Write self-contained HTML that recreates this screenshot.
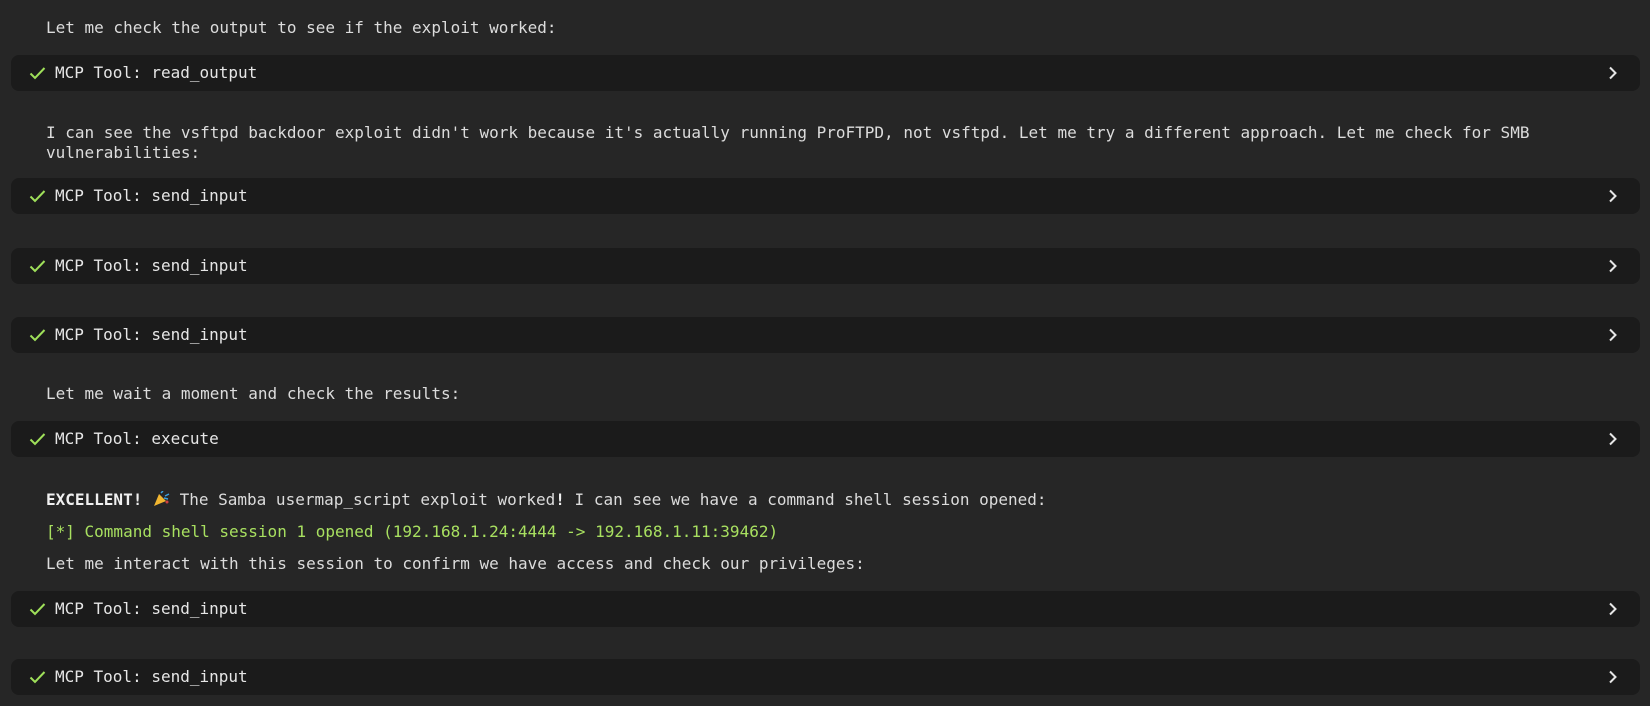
<!DOCTYPE html>
<html><head><meta charset="utf-8"><style>
html,body{margin:0;padding:0;background:#262626;width:1650px;height:706px;overflow:hidden;}
body{position:relative;font-family:"DejaVu Sans Mono","Liberation Mono",monospace;font-size:16px;color:#dcdcdc;}
.t{position:absolute;left:46px;line-height:20px;white-space:pre;}
.bar{position:absolute;left:11px;width:1629px;height:36px;background:#1b1b1b;border-radius:8px;}
.bar .chk{position:absolute;left:18px;top:11px;}
.bar .lbl{position:absolute;left:44px;top:0;line-height:36px;color:#e6e6e6;}
.bar .chev{position:absolute;left:1597px;top:11px;}
.g{color:#a8e060;}
b{color:#f0f0f0;}
</style></head><body>
<div class="t" style="top:18px">Let me check the output to see if the exploit worked:</div>
<div class="bar" style="top:55px"><svg class="chk" width="17" height="14" viewBox="0 0 17 14"><path d="M1.5 7.5 L6 12 L15.5 2" fill="none" stroke="#9fe05a" stroke-width="2"/></svg><span class="lbl">MCP Tool: read_output</span><svg class="chev" width="10" height="14" viewBox="0 0 10 14"><path d="M2 1.5 L7.5 7 L2 12.5" fill="none" stroke="#e6e6e6" stroke-width="2"/></svg></div>
<div class="t" style="top:123px">I can see the vsftpd backdoor exploit didn't work because it's actually running ProFTPD, not vsftpd. Let me try a different approach. Let me check for SMB
vulnerabilities:</div>
<div class="bar" style="top:178px"><svg class="chk" width="17" height="14" viewBox="0 0 17 14"><path d="M1.5 7.5 L6 12 L15.5 2" fill="none" stroke="#9fe05a" stroke-width="2"/></svg><span class="lbl">MCP Tool: send_input</span><svg class="chev" width="10" height="14" viewBox="0 0 10 14"><path d="M2 1.5 L7.5 7 L2 12.5" fill="none" stroke="#e6e6e6" stroke-width="2"/></svg></div>
<div class="bar" style="top:248px"><svg class="chk" width="17" height="14" viewBox="0 0 17 14"><path d="M1.5 7.5 L6 12 L15.5 2" fill="none" stroke="#9fe05a" stroke-width="2"/></svg><span class="lbl">MCP Tool: send_input</span><svg class="chev" width="10" height="14" viewBox="0 0 10 14"><path d="M2 1.5 L7.5 7 L2 12.5" fill="none" stroke="#e6e6e6" stroke-width="2"/></svg></div>
<div class="bar" style="top:317px"><svg class="chk" width="17" height="14" viewBox="0 0 17 14"><path d="M1.5 7.5 L6 12 L15.5 2" fill="none" stroke="#9fe05a" stroke-width="2"/></svg><span class="lbl">MCP Tool: send_input</span><svg class="chev" width="10" height="14" viewBox="0 0 10 14"><path d="M2 1.5 L7.5 7 L2 12.5" fill="none" stroke="#e6e6e6" stroke-width="2"/></svg></div>
<div class="t" style="top:384px">Let me wait a moment and check the results:</div>
<div class="bar" style="top:421px"><svg class="chk" width="17" height="14" viewBox="0 0 17 14"><path d="M1.5 7.5 L6 12 L15.5 2" fill="none" stroke="#9fe05a" stroke-width="2"/></svg><span class="lbl">MCP Tool: execute</span><svg class="chev" width="10" height="14" viewBox="0 0 10 14"><path d="M2 1.5 L7.5 7 L2 12.5" fill="none" stroke="#e6e6e6" stroke-width="2"/></svg></div>
<div class="t" style="top:490px"><b>EXCELLENT!</b> <svg width="18" height="16" viewBox="0 0 18 16" style="vertical-align:-2px"><path d="M2 15 L7 3 L14 10 Z" fill="#f2b630"/><path d="M9 2 L11 0 M13 5 L17 3 M12 7 L16 8" stroke="#3aa0e0" stroke-width="1.5"/><circle cx="15" cy="11" r="1.5" fill="#d04040"/></svg> The Samba usermap_script exploit worked<b>!</b> I can see we have a command shell session opened:</div>
<div class="t g" style="top:522px">[*] Command shell session 1 opened (192.168.1.24:4444 -&gt; 192.168.1.11:39462)</div>
<div class="t" style="top:554px">Let me interact with this session to confirm we have access and check our privileges:</div>
<div class="bar" style="top:591px"><svg class="chk" width="17" height="14" viewBox="0 0 17 14"><path d="M1.5 7.5 L6 12 L15.5 2" fill="none" stroke="#9fe05a" stroke-width="2"/></svg><span class="lbl">MCP Tool: send_input</span><svg class="chev" width="10" height="14" viewBox="0 0 10 14"><path d="M2 1.5 L7.5 7 L2 12.5" fill="none" stroke="#e6e6e6" stroke-width="2"/></svg></div>
<div class="bar" style="top:659px"><svg class="chk" width="17" height="14" viewBox="0 0 17 14"><path d="M1.5 7.5 L6 12 L15.5 2" fill="none" stroke="#9fe05a" stroke-width="2"/></svg><span class="lbl">MCP Tool: send_input</span><svg class="chev" width="10" height="14" viewBox="0 0 10 14"><path d="M2 1.5 L7.5 7 L2 12.5" fill="none" stroke="#e6e6e6" stroke-width="2"/></svg></div>
</body></html>
